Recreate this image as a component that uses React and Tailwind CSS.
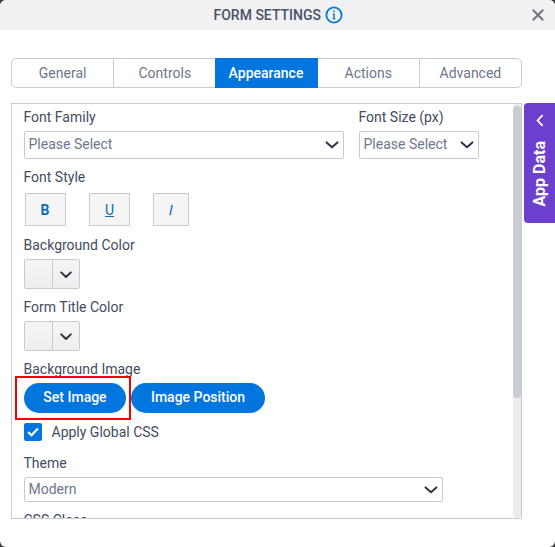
import React, { useState } from 'react';

const tabs = ['General', 'Controls', 'Appearance', 'Actions', 'Advanced'];

function Chevron({ className = '' }) {
  return (
    <svg width="14" height="8" viewBox="0 0 14 8" fill="none" className={className}>
      <path d="M1.6 1.4 L7 6.2 L12.4 1.4" stroke="#2b3348" strokeWidth="2" strokeLinejoin="round" strokeLinecap="round" />
    </svg>
  );
}

function Label({ children }) {
  return <div className="h-5 -ml-[0.5px] text-sm leading-5 text-[#434b5f] whitespace-nowrap">{children}</div>;
}

function Select({ value, className }) {
  return (
    <button className={`flex items-center justify-between border border-[#c8cbd6] rounded-[2px] bg-white pl-[3.5px] pr-[4px] text-sm leading-5 text-[#6c778d] ${className}`}>
      <span className="-mt-0.5">{value}</span>
      <Chevron />
    </button>
  );
}

function ColorPicker() {
  return (
    <button className="flex w-14 h-[30px] border border-[#c8cbd6] rounded-[2px] bg-linear-to-b from-[#f5f5f5] to-[#eeeeee]">
      <span className="w-7 h-full border-r border-[#c8cbd6]"></span>
      <span className="flex-1 h-full flex items-center justify-center pt-[2px]">
        <svg width="12" height="8" viewBox="0 0 12 8" fill="none">
          <path d="M1.2 1.4 L6 6 L10.8 1.4" stroke="#2b3348" strokeWidth="2" strokeLinejoin="round" strokeLinecap="round" />
        </svg>
      </span>
    </button>
  );
}

export default function App() {
  const [active, setActive] = useState('Appearance');
  const [globalCss, setGlobalCss] = useState(true);

  return (
    <div className="w-[555px] h-[547px] bg-[#3a3a3c] overflow-hidden font-['Roboto',sans-serif]">
      <div className="relative w-full h-full bg-white rounded-[6px] overflow-hidden">
        {/* Header */}
        <div className="relative h-[30px] bg-[#f1f1f4] flex items-center pl-[213.5px]">
          <h2 className="text-sm leading-5 font-medium text-[#4a5266] whitespace-nowrap">FORM SETTINGS</h2>
          <svg width="18" height="18" viewBox="0 0 18 18" fill="none" className="ml-[4px] -mt-px">
            <circle cx="9" cy="9" r="7.6" stroke="#0375de" strokeWidth="1.8" />
            <path d="M9 7.6 V12.8 M9 4.6 V6.3 M7.8 8.1 H9 M7.6 12.6 H10.4" stroke="#0375de" strokeWidth="1.4" />
          </svg>
          <button className="absolute right-[11px] top-[9px]">
            <svg width="12" height="12" viewBox="0 0 12 12" fill="none">
              <path d="M0.8 0.8 L11.2 11.2 M11.2 0.8 L0.8 11.2" stroke="#6f7685" strokeWidth="2" />
            </svg>
          </button>
        </div>

        {/* Tabs */}
        <div className="flex ml-[11px] mt-7 w-[511px] h-[30px] border border-[#c8cbd6] rounded-[5px]">
          {tabs.map((tab) => (
            <button
              key={tab}
              onClick={() => setActive(tab)}
              className={`flex-1 pb-px text-sm leading-5 border-r last:border-r-0 ${
                tab === active
                  ? 'bg-[#0375de] border-[#0375de] text-white font-medium -my-px -ml-px'
                  : 'border-[#c8cbd6] text-[#6c778d]'
              }`}
            >
              {tab}
            </button>
          ))}
        </div>

        {/* Settings panel */}
        <div className="flex ml-[11px] mt-[15px] w-[511px] h-[416px] border border-[#c8cbd6] overflow-hidden">
          <div className="flex-1 pl-3 pt-[3px]">
            <div className="flex gap-[15px]">
              <div>
                <Label>Font Family</Label>
                <Select value="Please Select" className="mt-1 w-[320px] h-7" />
              </div>
              <div>
                <Label>Font Size (px)</Label>
                <Select value="Please Select" className="mt-1 w-[120px] h-7" />
              </div>
            </div>

            <div className="mt-2">
              <Label>Font Style</Label>
              <div className="flex mt-[6px] ml-px gap-[23px] text-sm text-[#0a6db8]">
                <button className="w-[41px] h-[33px] border border-[#c8cbd6] bg-[#f5f5f5] font-bold pr-px">B</button>
                <button className="w-[41px] h-[33px] border border-[#c8cbd6] bg-[#f5f5f5] underline">U</button>
                <button className="w-9 h-[33px] border border-[#c8cbd6] bg-[#f5f5f5]">
                  <span className="inline-block -skew-x-12">I</span>
                </button>
              </div>
            </div>

            <div className="mt-[9px]">
              <Label>Background Color</Label>
              <div className="flex mt-1">
                <ColorPicker />
              </div>
            </div>

            <div className="mt-2">
              <Label>Form Title Color</Label>
              <div className="flex mt-1">
                <ColorPicker />
              </div>
            </div>

            <div className="mt-2">
              <Label>Background Image</Label>
              <div className="flex gap-[5px] mt-1 text-sm leading-5 font-medium text-white">
                <div className="relative">
                  <button className="w-[102px] h-[30px] rounded-full bg-[#0375de] pb-[2px]">Set Image</button>
                  {/* Highlight */}
                  <div className="absolute -left-[9px] -top-[7px] w-[116px] h-[44px] border-2 border-[#f50000]"></div>
                </div>
                <button className="w-[134px] h-[30px] rounded-full bg-[#0375de] pb-[2px]">Image Position</button>
              </div>
            </div>

            <div className="flex items-center mt-[10px] h-[18px] gap-[10px]">
              <button
                onClick={() => setGlobalCss(!globalCss)}
                className="w-[18px] h-[18px] rounded-[2px] bg-[#0375de] flex items-center justify-center"
              >
                {globalCss && (
                  <svg width="12" height="10" viewBox="0 0 12 10" fill="none">
                    <path d="M1 5 L4.5 8.3 L11 1.5" stroke="#fff" strokeWidth="2.2" />
                  </svg>
                )}
              </button>
              <Label>Apply Global CSS</Label>
            </div>

            <div className="mt-3">
              <Label>Theme</Label>
              <Select value="Modern" className="mt-1 w-[419px] h-[25px]" />
            </div>

            <div className="mt-2">
              <Label>CSS Class</Label>
            </div>
          </div>

          {/* Scrollbar */}
          <div className="w-2 h-full rounded-full bg-[#ebebed] pt-[2px]">
            <div className="w-2 h-[292px] rounded-full bg-[#c9ccd1]"></div>
          </div>
        </div>

        {/* App Data drawer handle */}
        <button className="absolute right-0 top-[103px] w-[31px] h-[120px] rounded-l-[4px] bg-[#6d3fcf] text-white flex flex-col items-center pt-[11px]">
          <svg width="8" height="13" viewBox="0 0 8 13" fill="none" className="ml-px">
            <path d="M6.6 1.2 L1.6 6.5 L6.6 11.8" stroke="#fff" strokeWidth="1.8" />
          </svg>
          <span className="mt-[14px] text-base leading-5 font-bold whitespace-nowrap [writing-mode:vertical-rl] rotate-180">App Data</span>
        </button>
      </div>
    </div>
  );
}
